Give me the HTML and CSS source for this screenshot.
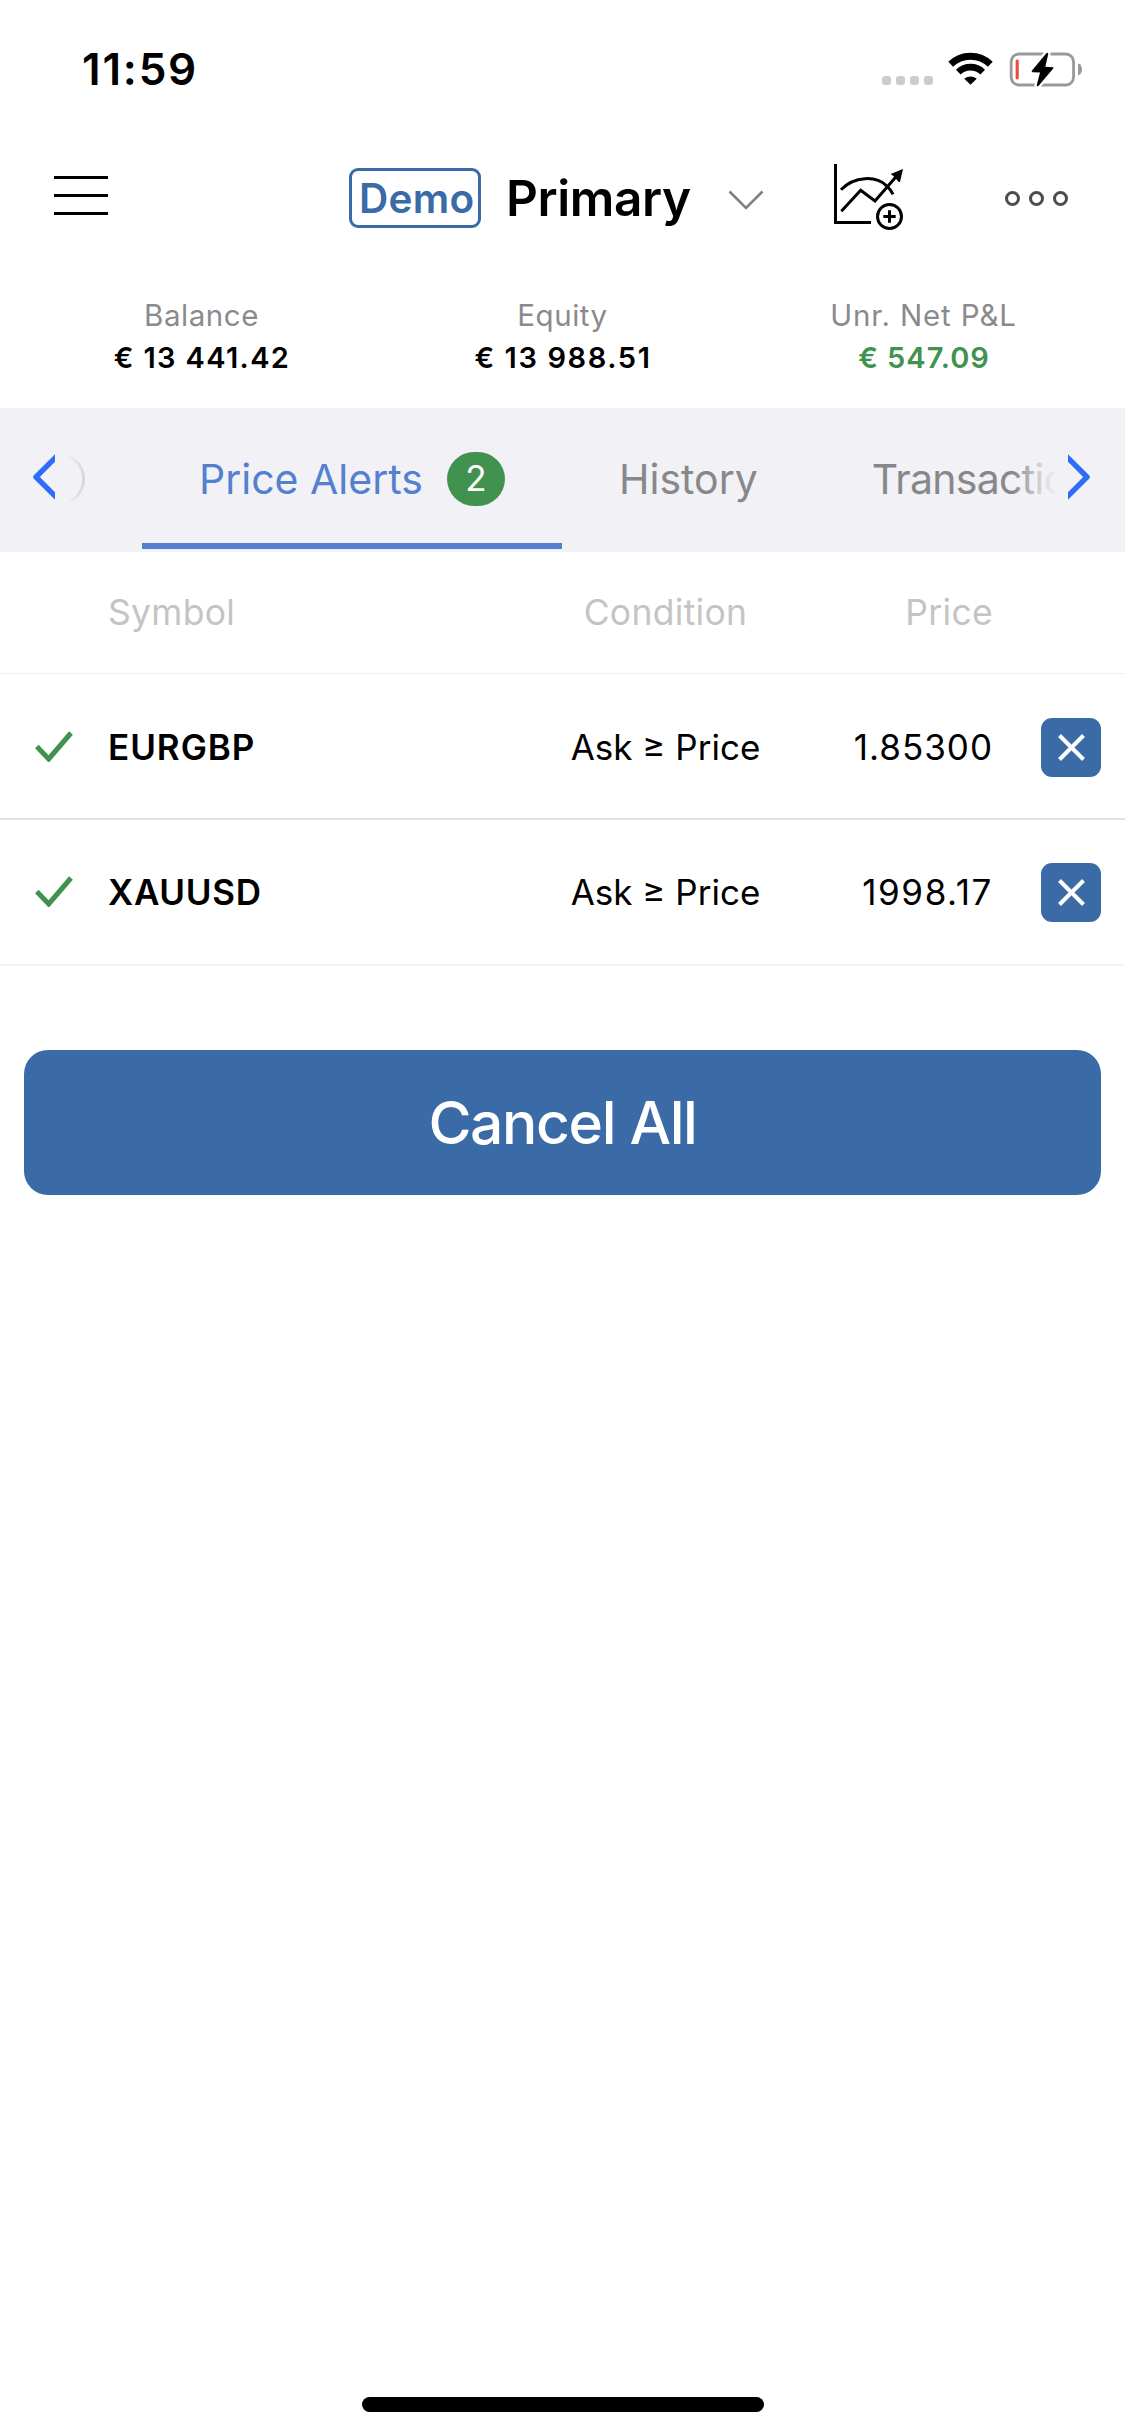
FILE: index.html
```html
<!DOCTYPE html>
<html lang="en">
<head>
<meta charset="utf-8">
<title>Price Alerts</title>
<link rel="stylesheet" href="styles.css">
</head>
<body>
<div class="screen">
  <div class="status">
    <span class="time">11:59</span>
    <div class="status-icons">
      <div class="signal"><i></i><i></i><i></i><i></i></div>
      <svg class="wifi" viewBox="445 95 136 100">
        <path d="M453 132A86 86 0 0 1 573 132" fill="none" stroke="#000" stroke-width="21"/>
        <path d="M476 156A53 53 0 0 1 550 156" fill="none" stroke="#000" stroke-width="20"/>
        <path d="M513 194L494 176A30 30 0 0 1 532 176Z"/>
      </svg>
      <svg class="battery" viewBox="627 94 220 106">
        <rect x="631.5" y="100" width="189" height="94" rx="24" fill="none" stroke="#999" stroke-width="8.5"/>
        <rect x="645" y="117" width="9.5" height="60" rx="4.5" fill="#ea4e3d"/>
        <path d="M834 129C850 133 850 161 834 165Z" fill="#999"/>
        <path d="M738 98L694 151Q692 155 697 155L719 156L709 194Q709 200 714 197L759 144Q762 140 757 140L735 139L744 99Q743 94 738 98Z" stroke="#fff" stroke-width="14" paint-order="stroke" stroke-linejoin="round"/>
      </svg>
    </div>
  </div>

  <header class="header">
    <div class="menu"><i></i><i></i><i></i></div>
    <span class="demo">Demo</span>
    <span class="account">Primary</span>
    <svg class="caret" viewBox="0 0 36 20"><path d="M1.5 1.5L18 18L34.5 1.5" fill="none" stroke="#808080" stroke-width="2.6"/></svg>
    <svg class="chart" viewBox="102 432 207 198" fill="none" stroke="#000" stroke-width="9">
      <path d="M106.5 432V607.5H213"/>
      <path d="M123 509C163 467 229 467 259 497C268 505 274 512 279 523"/>
      <path d="M124 574L182 511L225 543L290 468"/>
      <path d="M309 447L272 462L283 470L296 486L300 486Z" fill="#000" stroke="none"/>
      <circle cx="268.5" cy="589.5" r="36"/>
      <path d="M250 589.5H287M268.5 571V608"/>
    </svg>
    <div class="more"><i></i><i></i><i></i></div>
  </header>

  <section class="metrics">
    <div class="metric"><span class="label">Balance</span><b class="value">€ 13 441.42</b></div>
    <div class="metric"><span class="label">Equity</span><b class="value equity">€ 13 988.51</b></div>
    <div class="metric"><span class="label wide">Unr. Net P&amp;L</span><b class="value profit">€ 547.09</b></div>
  </section>

  <nav class="tabs">
    <div class="tab first"><span class="ring"></span></div>
    <div class="tab active">Price Alerts<span class="badge">2</span></div>
    <div class="tab">History</div>
    <div class="tab last">Transactions</div>
    <div class="fade fade-left"><svg viewBox="0 0 22 48"><path d="M26 1L3 24L26 47" fill="none" stroke="#2f6df8" stroke-width="5.4" stroke-linejoin="round"/></svg></div>
    <div class="fade fade-right"><svg viewBox="0 0 22 48"><path d="M-4 1L19 24L-4 47" fill="none" stroke="#2f6df8" stroke-width="5.4" stroke-linejoin="round"/></svg></div>
  </nav>

  <div class="row head">
    <span></span><span>Symbol</span><span class="cond">Condition</span><span class="price">Price</span>
  </div>
  <div class="row">
    <svg class="check" viewBox="0 0 38 31"><path d="M1.8 15.5L13.7 28L36 2" fill="none" stroke="#41924f" stroke-width="5"/></svg>
    <b class="symbol">EURGBP</b><span class="cond">Ask ≥ Price</span><span class="price">1.85300</span>
    <span class="close"><svg viewBox="0 0 27 27"><path d="M1.5 1.5L25.5 25.5M25.5 1.5L1.5 25.5" stroke="#fff" stroke-width="4"/></svg></span>
  </div>
  <div class="row light">
    <svg class="check" viewBox="0 0 38 31"><path d="M1.8 15.5L13.7 28L36 2" fill="none" stroke="#41924f" stroke-width="5"/></svg>
    <b class="symbol">XAUUSD</b><span class="cond">Ask ≥ Price</span><span class="price gold">1998.17</span>
    <span class="close"><svg viewBox="0 0 27 27"><path d="M1.5 1.5L25.5 25.5M25.5 1.5L1.5 25.5" stroke="#fff" stroke-width="4"/></svg></span>
  </div>

  <div class="cancel">Cancel All</div>
  <div class="home"></div>
</div>
</body>
</html>
```
FILE: styles.css
```css
* { box-sizing: border-box; }
body { margin: 0; background: #fff; color: #000; font-family: "Inter", "Liberation Sans", sans-serif; }
svg { display: block; flex: none; }
.screen { width: 1125px; height: 2436px; display: flex; flex-direction: column; overflow: hidden; }
.screen > * { flex: none; }

.status { height: 138px; padding: 0 42px 0 82px; display: flex; justify-content: space-between; align-items: center; }
.time { font-size: 44px; font-weight: 600; letter-spacing: 1.8px; }
.status-icons { display: flex; align-items: flex-end; height: 34px; }
.signal { display: flex; gap: 5px; margin: 0 15px 1px 0; }
.signal i { width: 9px; height: 9px; border-radius: 3px; background: #ccc; }
.wifi { width: 45px; height: 33px; margin: 0 16px 1px 0; }
.battery { width: 74px; height: 35px; margin-bottom: -1px; }

.header { height: 120px; padding-left: 54px; display: flex; align-items: center; }
.menu { width: 54px; display: flex; flex-direction: column; gap: 15px; margin: -5px 241px 0 0; }
.menu i { height: 3px; background: #000; }
.demo { width: 132px; height: 60px; border: 3px solid #3a6ba6; border-radius: 9px; color: #3a6ba6; font-size: 40.5px; font-weight: 600; letter-spacing: 0.3px; line-height: 55px; padding-left: 7px; white-space: nowrap; }
.account { width: 222px; margin-left: 25px; font-size: 49.5px; font-weight: 600; letter-spacing: -0.4px; line-height: 61px; }
.caret { width: 36px; height: 20px; margin-top: 3px; }
.chart { width: 69px; height: 66px; margin: -2px 102px 0 70px; }
.more { display: flex; gap: 9px; }
.more i { width: 15px; height: 15px; border: 3px solid #4d4d4d; border-radius: 50%; }

.metrics { height: 150px; padding: 36px 21px 0; display: grid; grid-template-columns: repeat(3, 1fr); text-align: center; }
.metric { display: flex; flex-direction: column; }
.label { font-size: 29.5px; line-height: 42px; letter-spacing: 0.55px; color: #8a8a8d; }
.wide { letter-spacing: 0.85px; }
.value { font-size: 29px; line-height: 44px; font-weight: 600; letter-spacing: 1.35px; padding-left: 1px; }
.equity { letter-spacing: 1.6px; }
.profit { color: #41924f; letter-spacing: 1px; }

.tabs { position: relative; height: 144px; background: #f1f1f6; display: flex; overflow: hidden; }
.tab { display: flex; align-items: center; flex: none; height: 141px; padding: 6px 57px 0; border-bottom: 6px solid transparent; font-size: 41px; color: #88888b; }
.first { width: 142px; padding-left: 27px; }
.active { width: 420px; border-color: #5580cf; color: #5580cf; }
.last { letter-spacing: -0.7px; }
.ring { width: 58px; height: 54px; border: 3px solid #8e8e93; border-radius: 27px; flex: none; }
.badge { width: 58px; height: 54px; margin-left: auto; border-radius: 27px; background: #41924f; color: #fff; font-size: 35px; line-height: 53px; text-align: center; flex: none; }
.fade { position: absolute; top: 0; width: 112px; height: 144px; display: flex; align-items: center; }
.fade svg { width: 22px; height: 48px; margin-top: -6px; }
.fade-left { left: 0; padding-left: 33px; background: linear-gradient(to right, #f1f1f6 67px, rgba(241, 241, 246, 0.75) 83px, rgba(241, 241, 246, 0) 112px); }
.fade-right { right: 0; justify-content: flex-end; padding-right: 35px; background: linear-gradient(to left, #f1f1f6 67px, rgba(241, 241, 246, 0.75) 83px, rgba(241, 241, 246, 0) 112px); }

.row { height: 146px; padding-top: 2px; border-bottom: 2px solid #e2e2e2; display: grid; grid-template-columns: 108px 432px 251px 202px 108px; align-items: center; font-size: 35px; }
.head { height: 122px; padding: 0 0 1px; border-bottom: 1px solid #f1f1f1; font-size: 35.5px; letter-spacing: 0.3px; color: #c4c4c4; }
.light { padding-top: 0; border-color: #f4f4f4; }
.check { width: 38px; height: 31px; margin: -2px 0 0 35px; }
.symbol { font-weight: 600; letter-spacing: 0.95px; }
.light .symbol { letter-spacing: 0.7px; }
.cond { text-align: center; }
.price { text-align: right; }
.row:not(.head) .price { letter-spacing: 1px; }
.row .gold.gold.gold { letter-spacing: 1.6px; }
.close { width: 60px; height: 59px; margin-left: 48px; border-radius: 11px; background: #3a6ba6; display: flex; align-items: center; justify-content: center; }
.close svg { width: 27px; height: 27px; }

.cancel { height: 145px; margin: 84px 24px 0; border-radius: 24px; background: #3a6ba6; color: #fff; font-size: 58.7px; font-weight: 500; letter-spacing: -1.35px; line-height: 145px; text-align: center; }
.home { width: 402px; height: 15px; margin: auto auto 24px 362px; border-radius: 8px; background: #000; }
```
